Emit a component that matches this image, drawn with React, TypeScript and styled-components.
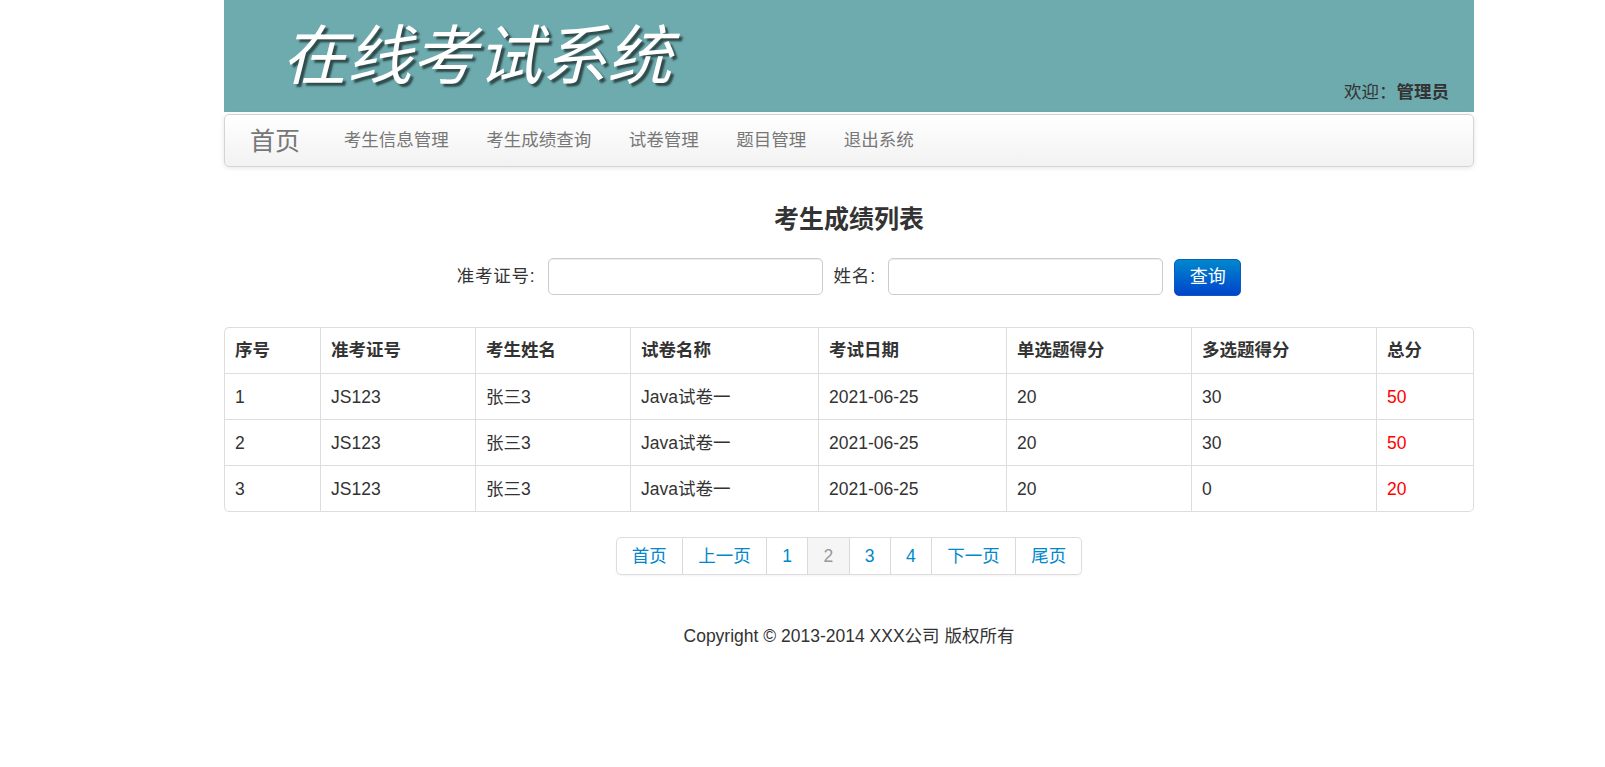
import React from 'react'
import styled, { createGlobalStyle } from 'styled-components'

const GlobalStyle = createGlobalStyle`
    html, body {
        margin: 0;
        padding: 0;
        background: #fff;
    }
    body {
        font-family: "Liberation Sans", "Noto Sans CJK SC", sans-serif;
        font-size: 17.5px;
        line-height: 25px;
        color: #333;
    }
`

type ScoreRow = {
    id: number;
    number: string;
    name: string;
    paper: string;
    date: string;
    single: number;
    multi: number;
    total: number;
}

const columns = [
    { title: '序号', width: 96 },
    { title: '准考证号', width: 155 },
    { title: '考生姓名', width: 155 },
    { title: '试卷名称', width: 188 },
    { title: '考试日期', width: 188 },
    { title: '单选题得分', width: 185 },
    { title: '多选题得分', width: 185 },
    { title: '总分', width: 97 },
]

const rows: ScoreRow[] = [
    { id: 1, number: 'JS123', name: '张三3', paper: 'Java试卷一', date: '2021-06-25', single: 20, multi: 30, total: 50 },
    { id: 2, number: 'JS123', name: '张三3', paper: 'Java试卷一', date: '2021-06-25', single: 20, multi: 30, total: 50 },
    { id: 3, number: 'JS123', name: '张三3', paper: 'Java试卷一', date: '2021-06-25', single: 20, multi: 0, total: 20 },
]

const navItems = ['考生信息管理', '考生成绩查询', '试卷管理', '题目管理', '退出系统']
const pages = ['首页', '上一页', '1', '2', '3', '4', '下一页', '尾页']

const Page = styled.div`
    width: 1250px;
    margin-left: 224px;
`

const Banner = styled.header`
    height: 112px;
    background: #6eabae;
    display: flex;
    justify-content: space-between;
    align-items: flex-end;
    padding: 0 25px 7px 58px;
    box-sizing: border-box;
`

const Logo = styled.h1`
    margin: 0 0 3px;
    align-self: center;
    font-family: "Noto Sans CJK SC", sans-serif;
    font-size: 65px;
    line-height: 72px;
    font-weight: 400;
    font-style: italic;
    color: #fff;
    text-shadow: 3px 3px 2px #2f4a4a;
`

const Welcome = styled.div`
    color: #333;
    b {
        font-weight: 700;
    }
`

const NavBar = styled.nav`
    height: 53px;
    margin-top: 2px;
    box-sizing: border-box;
    display: flex;
    align-items: center;
    padding-left: 25px;
    border: 1px solid #d4d4d4;
    border-radius: 5px;
    background: linear-gradient(180deg, #ffffff, #f2f2f2);
    box-shadow: 0 1px 5px rgba(0, 0, 0, 0.1);
`

const Brand = styled.a`
    font-size: 25px;
    color: #777;
    margin-right: 25px;
    line-height: 30px;
`

const NavLink = styled.a`
    padding: 0 18.75px;
    color: #777;
`

const Heading = styled.h2`
    margin: 34px 0 0;
    text-align: center;
    font-size: 25px;
    line-height: 36px;
    font-weight: 700;
    color: #333;
`

const SearchForm = styled.form`
    height: 37px;
    display: flex;
    align-items: center;
    justify-content: center;
    margin-top: 21px;
`

const Label = styled.label<{ $gap: number }>`
    margin-right: ${props => props.$gap}px;
    letter-spacing: 0.8px;
    color: #333;
`

const TextInput = styled.input`
    width: 275px;
    height: 37px;
    box-sizing: border-box;
    margin-right: 11px;
    padding: 5px 7px;
    border: 1px solid #ccc;
    border-radius: 5px;
    background: #fff;
    box-shadow: inset 0 1px 1px rgba(0, 0, 0, 0.075);
    outline: none;
`

const SearchButton = styled.button`
    align-self: flex-start;
    width: 67px;
    height: 37px;
    margin-top: 1px;
    padding: 0;
    border: 1px solid #0a5cbf;
    border-radius: 5px;
    background: linear-gradient(180deg, #0088cc, #0044cc);
    color: #fff;
    font: inherit;
    font-size: 18px;
`

const ScoreTable = styled.table`
    width: 100%;
    margin-top: 32px;
    table-layout: fixed;
    border-collapse: separate;
    border-spacing: 0;
    border: 1px solid #ddd;
    border-left: 0;
    border-radius: 5px;
    th, td {
        height: 45px;
        box-sizing: content-box;
        padding: 0 10px;
        text-align: left;
        border-left: 1px solid #ddd;
        border-top: 1px solid #ddd;
        vertical-align: middle;
    }
    td {
        height: 43px;
        padding-top: 2px;
    }
    th {
        font-weight: 700;
        border-top: 0;
    }
    tr:first-child th:first-child {
        border-top-left-radius: 5px;
    }
    tr:last-child td:first-child {
        border-bottom-left-radius: 5px;
    }
`

const Total = styled.td`
    color: #ff0000;
`

const Pager = styled.ul`
    display: flex;
    justify-content: center;
    margin: 25px 0 0;
    padding: 0;
    list-style: none;
`

const PageItem = styled.li<{ $current?: boolean }>`
    height: 38px;
    box-sizing: border-box;
    padding: 0 15.25px;
    line-height: 36px;
    border: 1px solid #ddd;
    border-left-width: 0;
    color: ${props => (props.$current ? '#999' : '#0088cc')};
    background: ${props => (props.$current ? '#f5f5f5' : '#fff')};
    box-shadow: 0 1px 2px rgba(0, 0, 0, 0.05);
    &:first-child {
        border-left-width: 1px;
        border-radius: 5px 0 0 5px;
    }
    &:last-child {
        border-radius: 0 5px 5px 0;
    }
`

const Footer = styled.footer`
    margin-top: 49px;
    text-align: center;
    color: #333;
`

export default function App() {
    return (
        <Page>
            <GlobalStyle />
            <Banner>
                <Logo>在线考试系统</Logo>
                <Welcome>欢迎：<b>管理员</b></Welcome>
            </Banner>
            <NavBar>
                <Brand>首页</Brand>
                {navItems.map(item => <NavLink key={item}>{item}</NavLink>)}
            </NavBar>
            <Heading>考生成绩列表</Heading>
            <SearchForm>
                <Label $gap={12}>准考证号:</Label>
                <TextInput />
                <Label $gap={12.5}>姓名:</Label>
                <TextInput />
                <SearchButton type="button">查询</SearchButton>
            </SearchForm>
            <ScoreTable>
                <colgroup>
                    {columns.map(col => <col key={col.title} width={col.width} />)}
                </colgroup>
                <thead>
                    <tr>
                        {columns.map(col => <th key={col.title}>{col.title}</th>)}
                    </tr>
                </thead>
                <tbody>
                    {rows.map(row => (
                        <tr key={row.id}>
                            <td>{row.id}</td>
                            <td>{row.number}</td>
                            <td>{row.name}</td>
                            <td>{row.paper}</td>
                            <td>{row.date}</td>
                            <td>{row.single}</td>
                            <td>{row.multi}</td>
                            <Total>{row.total}</Total>
                        </tr>
                    ))}
                </tbody>
            </ScoreTable>
            <Pager>
                {pages.map(page => <PageItem key={page} $current={page === '2'}>{page}</PageItem>)}
            </Pager>
            <Footer>Copyright © 2013-2014 XXX公司 版权所有</Footer>
        </Page>
    )
}
